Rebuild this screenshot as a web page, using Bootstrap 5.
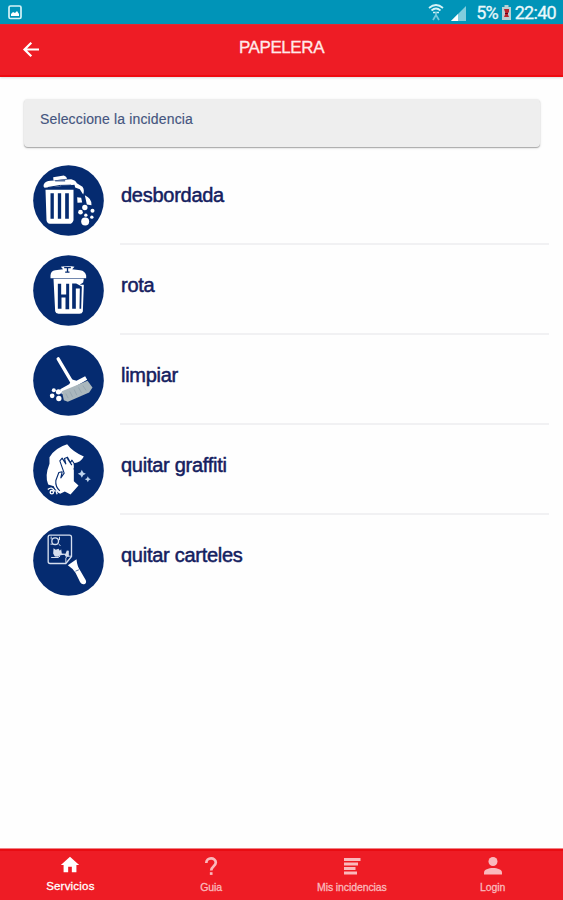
<!DOCTYPE html>
<html lang="es">
<head>
<meta charset="utf-8">
<meta name="viewport" content="width=device-width, initial-scale=1">
<title>Papelera</title>
<link href="https://cdn.jsdelivr.net/npm/bootstrap@5.3.0/dist/css/bootstrap.min.css" rel="stylesheet">
<style>
body{font-family:"Liberation Sans",Arial,sans-serif;background:#fefefe;height:900px;overflow:hidden}
svg{display:block;flex:none}
.status{height:24px;background:#0094b8;color:#e9f8fb;font:18px/24px Roboto,sans-serif;padding:1px 7px 0 8px;-webkit-text-stroke:.3px}
.status .pct{margin-left:9px;letter-spacing:-.9px;margin-right:4px}
.status .clock{margin-left:4px;letter-spacing:-.7px}
.topbar{height:53px;background:#ee1c25;border-top:1px solid #e02a33;border-bottom:2px solid #ee0a10;box-shadow:0 1px 2px #0002;color:#ffe9ea;display:grid;grid-template-columns:64px 1fr 64px}
.topbar h1{font-size:17px;line-height:20px;letter-spacing:-.42px;margin:13px 0 0;-webkit-text-stroke:.3px}
.topbar a{padding:14px 0 0 20px;color:#fff}
.picker{margin:22px 23px 0 24px;height:48px;background:#eee;border-radius:4px;box-shadow:0 1px 1px #aaa,0 1px 3px #0002;color:#45557f;font-size:14px;line-height:18px;letter-spacing:.15px;padding:11px 16px;-webkit-text-stroke:.15px}
.issues{margin-top:8px}
.issue{height:90px;padding:0 14px 0 33px;background:transparent}
.issue svg{margin-top:10px}
.issue .txt{margin-left:16px;height:90px;border-bottom:2px solid #f1f1f3;color:#14205f;font-size:20px;line-height:24px;letter-spacing:-.27px;padding:28px 0 0 1px;-webkit-text-stroke:.5px}
.issue:last-child .txt{border-color:transparent}
.tabs{height:52px;background:#ee1c25;border-top:1px solid #f08085;box-shadow:inset 0 2px #e90c12}
.tabs a{color:#fab9bc;font-size:10.5px;line-height:12px;letter-spacing:-.1px;padding-top:6px;-webkit-text-stroke:.3px}
.tabs a span{margin-top:4px}
.tabs a.on{color:#fff;font-size:11.5px;letter-spacing:.2px;padding-top:5px}
</style>
<script src="https://cdn.jsdelivr.net/npm/bootstrap@5.3.0/dist/js/bootstrap.bundle.min.js"></script>
</head>
<body class="d-flex flex-column">
<div class="status d-flex align-items-center">
  <svg width="14" height="15" viewBox="0 0 14 15"><rect x="1" y="1" width="12" height="12.5" rx="1.5" fill="none" stroke="#d5f3f7" stroke-width="1.7"/><path d="M3 11V9l2-2 2 1 2-2 2 3v2z" fill="#fff"/></svg>
  <svg class="ms-auto" width="17" height="19" viewBox="0 0 17 19" fill="none" stroke="#d5f3f7" stroke-width="1.7"><path d="M1 5q7-6 14 0M3.500 7.500q4.500-4 9 0M5 9.500h6"/><path d="M8 9v3M5 17l3-5 3 5" stroke="#76c9dc"/></svg>
  <svg class="ms-1" width="18" height="18" viewBox="0 0 18 18"><path d="M2 17 17 2v15z" fill="#82cddd"/><path d="M2 17 9 10v7z" fill="#fff"/></svg>
  <span class="pct">5%</span>
  <svg width="9" height="15" viewBox="0 0 9 15"><path d="M0 2h2.500V0h4v2H9v13H0z" fill="#b9cfd4"/><path d="M2 4h5v3L5.500 8.500 7 12H2l1.500-3.500z" fill="#b8222b"/><path d="M3 8h3v1H3z" fill="#502"/></svg>
  <span class="clock">22:40</span>
</div>
<header class="topbar">
  <a href="#" aria-label="Volver"><svg width="21" height="20" viewBox="0 0 21 20" fill="none" stroke="currentColor" stroke-width="2.200"><path d="M19 10.500H4.500M11.300 3.700 4.500 10.500l6.800 6.800"/></svg></a>
  <h1 class="text-center fw-normal">PAPELERA</h1>
</header>
<main class="flex-grow-1">
  <div class="picker">Seleccione la incidencia</div>
  <div class="issues">
    <div class="issue d-flex">
      <svg width="71" height="71" viewBox="25.500 14.500 213 213"><circle cx="132" cy="121" r="106" fill="#052b70"/>
        <g fill="#fff"><path d="M58 72q5-9 20-10l62-5q14 3 17 12l17 11q7 11 2 23l-10-16-14-5-2-8-90 9q-5-5-2-11z"/><path d="M86 51 118 46q8 2 10 10L87 61z"/><path fill-rule="evenodd" d="M63 89h84v91q-3 11-13 11H76q-8-1-10-11zM78 99v77h10V99zm22 0v77h10V99zm22 0v77h11V99z"/>
        <path d="m158 111 12 2 3 14-14 1zM181 105q22 10 20 30l-14-2z"/><circle cx="181" cy="142" r="8"/><circle cx="204" cy="152" r="6"/><circle cx="168" cy="156" r="7"/><circle cx="182" cy="184" r="12"/><circle cx="202" cy="171" r="5"/><circle cx="184" cy="165" r="5"/></g>
        <path d="M92 62h30M70 82q40-9 70-7" stroke="#052b70" stroke-width="3" fill="none"/></svg>
      <div class="txt flex-grow-1">desbordada</div>
    </div>
    <div class="issue d-flex">
      <svg width="71" height="71" viewBox="25.500 14.500 213 213"><circle cx="132" cy="121" r="106" fill="#052b70"/>
        <g fill="#fff"><path d="M78 75q1-14 14-15l24-3-7-7q23-5 41 0l-7 7 24 3q15 2 18 16v8H78z"/><path fill-rule="evenodd" d="M87 86h91l-2 11-10 7h12l-3 80q-2 7-10 7h-63q-8 0-10-8zM100 101v75h11v-34h12v35h11v-76h-9v32h-15v-32zm43-1v76h11v-61h12l-1 61h5l2-67-17-9z"/></g><path d="M119 52h20M129 53v13M122 66h13" stroke="#052b70" stroke-width="4"/></svg>
      <div class="txt flex-grow-1">rota</div>
    </div>
    <div class="issue d-flex">
      <svg width="71" height="71" viewBox="25.500 14.500 213 213"><circle cx="132" cy="121" r="106" fill="#052b70"/>
        <path d="m101 56 43 73" stroke="#fff" stroke-width="10" stroke-linecap="round"/><path d="m107 147 27-15 9-14 13 4 26-14 6 11-76 43z" fill="#fff"/><path d="m112 153 77-31 15 20-10 15-64 28-12-5z" fill="#aab7bd"/><path d="m124 160 7 14m5-20 8 16m5-22 8 17m5-23 9 16m4-22 10 15" stroke="#98a7b1" stroke-width="3"/>
        <g fill="#fff"><circle cx="88" cy="150" r="6"/><circle cx="102" cy="155" r="8"/><circle cx="83" cy="167" r="7"/><circle cx="103" cy="175" r="8"/></g></svg>
      <div class="txt flex-grow-1">limpiar</div>
    </div>
    <div class="issue d-flex">
      <svg width="71" height="71" viewBox="25.500 14.500 213 213"><circle cx="132" cy="121" r="106" fill="#052b70"/>
        <path d="M75 81q16-28 53-39 15 21 50 37-9 18-30 20v54l14 13-24 27-17-9-14 7-13-8-6-15-17-5q-11-25 4-62z" fill="#fff"/>
        <path d="M106 182q-14-12-12-31l9-24 10-2-4 18 10-14-13-37 7-8 11 17-4-16 9-4 9 17 4-8 7 10q4 12-1 18M128 84l14 21" fill="none" stroke="#052b70" stroke-width="3.300" stroke-linejoin="round"/>
        <path d="M64 173q18-16 38 17l-7 4q-15-9-30-8z" fill="#052b70"/><g fill="none" stroke="#fff" stroke-width="4"><path d="M70 178q12-11 21 6"/><circle cx="82" cy="186" r="5"/><path d="M94 180l4 12"/></g>
        <path d="m172 119 4 8 8 4-8 4-4 8-4-8-8-4 8-4zM190 138l3 6 6 3-6 3-3 6-3-6-6-3 6-3z" fill="#bdd3ed"/></svg>
      <div class="txt flex-grow-1">quitar graffiti</div>
    </div>
    <div class="issue d-flex">
      <svg width="71" height="71" viewBox="25.500 14.500 213 213"><circle cx="132" cy="121" r="106" fill="#052b70"/>
        <g fill="none" stroke="#d6dfef" stroke-width="4"><path d="M76 45h59q6 0 6 6v58l-17 21H77q-6 0-6-6V51q0-6 5-6z"/><path d="M141 108h-13l-4 6v14" stroke-width="3"/><circle cx="92" cy="63" r="10"/></g><path d="M80 49v8M78 72h7M105 50v10M103 73l5 3" stroke="#d6dfef" stroke-width="3"/>
        <path d="m87 84 7 5 8-3 4 6 4-5 2 13 11 1 4-10 6 1v17l-9 1-4-6-12 1-7 5-10-1-5-9z" fill="#d6dfef"/><path d="M80 112h22l5-5" stroke="#d6dfef" stroke-width="3" fill="none"/>
        <path d="m130 135 26-18q2 21 11 34l17 29q3 9-5 12-7 2-12-6l-14-28q-10-15-23-23z" fill="#fff"/><path d="m153 153 10-4" stroke="#052b70" stroke-width="2"/></svg>
      <div class="txt flex-grow-1">quitar carteles</div>
    </div>
  </div>
</main>
<nav class="tabs row g-0 text-center">
  <a href="#" class="on col text-decoration-none d-flex flex-column align-items-center"><svg width="22" height="22" viewBox="0 0 24 24" fill="currentColor"><path d="M10 20v-6h4v6h5v-8h3L12 3 2 12h3v8z"/></svg><span>Servicios</span></a>
  <a href="#" class="col text-decoration-none d-flex flex-column align-items-center"><svg width="22" height="22" viewBox="0 0 22 22" fill="none" stroke="currentColor" stroke-width="2.700"><path d="M6.300 8c0-6 9.500-6 9.500-.4 0 3.600-4.600 3.700-4.600 8"/><path d="M11.200 17.200v2.700"/></svg><span>Guia</span></a>
  <a href="#" class="col text-decoration-none d-flex flex-column align-items-center"><svg width="22" height="22" viewBox="0 0 22 22" fill="none" stroke="currentColor" stroke-width="3"><path d="M3 4.500h16.500M3 9h14M3 13.500h11.500M3 18h13"/></svg><span>Mis incidencias</span></a>
  <a href="#" class="col text-decoration-none d-flex flex-column align-items-center"><svg width="22" height="22" viewBox="0 0 22 22" fill="currentColor"><circle cx="11" cy="6.500" r="4.500"/><path d="M2 19.500v-2c0-6 18-6 18 0v2z"/></svg><span>Login</span></a>
</nav>
</body>
</html>
